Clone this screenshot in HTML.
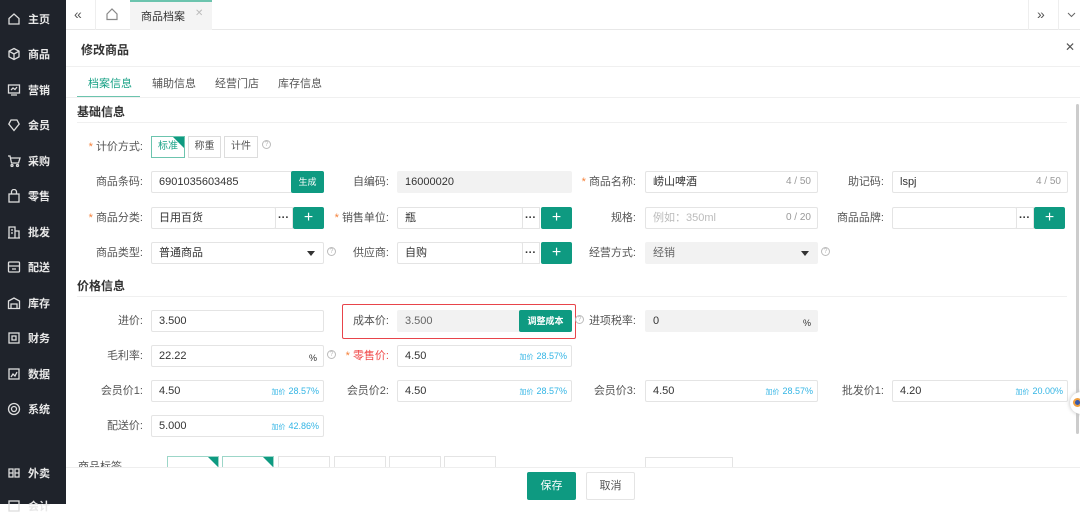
<!DOCTYPE html>
<html><head><meta charset="utf-8"><style>
*{box-sizing:border-box;margin:0;padding:0}
body{width:1080px;height:504px;overflow:hidden;position:relative;background:#fff;font-family:"Liberation Sans","Noto Sans CJK SC",sans-serif;font-size:11px;color:#333}
.a{position:absolute}
.side{left:0;top:0;width:66px;height:504px;background:#1f232b}
.si{position:absolute;left:7px;color:#e8e8e8;font-size:11px;font-weight:bold;display:flex;align-items:center;gap:7px}
.si svg{width:14px;height:14px;stroke:#ddd;fill:none;stroke-width:1.3}
.lbl{position:absolute;text-align:right;width:90px;color:#555;font-size:11px;line-height:22px;height:22px}
.in{position:absolute;height:22px;border:1px solid #e4e4e4;border-radius:2px;background:#fff;line-height:20px;padding-left:7px;font-size:11px;color:#333}
.dis{background:#f2f2f2;border-color:#f2f2f2;color:#666}
.cnt{position:absolute;right:6px;top:0;color:#999;font-size:10px;line-height:20px}
.pct{position:absolute;right:4px;top:0;color:#33b5e5;font-size:9px;line-height:20px}
.pct b{font-weight:normal;font-size:7px;margin-right:3px}
.plus{position:absolute;width:31px;height:22px;background:#0e9a81;color:#fff;font-size:16px;text-align:center;line-height:21px;border-radius:2px}
.dots{position:absolute;width:18px;height:22px;border:1px solid #e4e4e4;border-left:none;text-align:center;line-height:20px;font-weight:bold;color:#333}
.star{color:#f5813a}
.q{position:absolute;width:9px;height:9px;border:1px solid #bbb;border-radius:50%;font-size:7px;color:#bbb;text-align:center;line-height:8px}
.h{position:absolute;left:77px;font-weight:bold;font-size:12px;color:#333}
.arrow{position:absolute;right:8px;top:8px;width:0;height:0;border-left:4px solid transparent;border-right:4px solid transparent;border-top:5px solid #333}
</style></head><body>
<div class="a side"></div>
<div class="si" style="top:11px"><svg viewBox="0 0 14 14"><path d="M2 6.5L7 2l5 4.5V12H2z"/></svg>主页</div>
<div class="si" style="top:46px"><svg viewBox="0 0 14 14"><path d="M7 1.5l5 2.7v5.6L7 12.5 2 9.8V4.2zM2 4.2L7 7l5-2.8M7 7v5.5"/></svg>商品</div>
<div class="si" style="top:82px"><svg viewBox="0 0 14 14"><rect x="1.5" y="2" width="11" height="8"/><path d="M4 12h6M4 7l2-2 2 1.5 2-2.5"/></svg>营销</div>
<div class="si" style="top:117px"><svg viewBox="0 0 14 14"><path d="M7 12.5L1.8 6 4 2h6l2.2 4z"/></svg>会员</div>
<div class="si" style="top:153px"><svg viewBox="0 0 14 14"><path d="M1 2h2l1.5 7h7L13 4H4"/><circle cx="5" cy="11.5" r="1"/><circle cx="10.5" cy="11.5" r="1"/></svg>采购</div>
<div class="si" style="top:188px"><svg viewBox="0 0 14 14"><rect x="2" y="5" width="10" height="8"/><path d="M4.5 5V3a2.5 2.5 0 015 0v2"/></svg>零售</div>
<div class="si" style="top:224px"><svg viewBox="0 0 14 14"><path d="M2 13V2h6v11M8 6h4v7M1 13h12M4 5h2M4 8h2"/></svg>批发</div>
<div class="si" style="top:259px"><svg viewBox="0 0 14 14"><rect x="1.5" y="2" width="11" height="10" rx="1"/><path d="M1.5 6h11M5 9h4"/></svg>配送</div>
<div class="si" style="top:295px"><svg viewBox="0 0 14 14"><path d="M1.5 5L7 2l5.5 3v7.5h-11zM4 12.5V8h6v4.5"/></svg>库存</div>
<div class="si" style="top:330px"><svg viewBox="0 0 14 14"><rect x="2" y="2" width="10" height="10"/><rect x="5" y="5" width="4" height="4"/></svg>财务</div>
<div class="si" style="top:366px"><svg viewBox="0 0 14 14"><rect x="2" y="2" width="10" height="10"/><path d="M4 10l2-3 2 2 2-4"/></svg>数据</div>
<div class="si" style="top:401px"><svg viewBox="0 0 14 14"><circle cx="7" cy="7" r="5.5"/><circle cx="7" cy="7" r="2.5"/></svg>系统</div>
<div class="si" style="top:465px"><svg viewBox="0 0 14 14"><path d="M2 3h4v8H2zM8 3h4v8H8zM2 7h4M8 7h4"/></svg>外卖</div>
<div class="si" style="top:498px"><svg viewBox="0 0 14 14"><rect x="2" y="2" width="10" height="10"/></svg>会计</div>

<div class="a" style="left:66px;top:0;width:1014px;height:30px;border-bottom:1px solid #e8e8e8;background:#fff"></div>
<div class="a" style="left:95px;top:0;width:1px;height:30px;background:#eee"></div>
<div class="a" style="left:74px;top:6px;font-size:14px;color:#555">«</div>
<svg class="a" style="left:105px;top:7px" width="14" height="14" viewBox="0 0 14 14"><path d="M2 7L7 2l5 5v5.5H2z" fill="none" stroke="#888" stroke-width="1.2"/></svg>
<div class="a" style="left:130px;top:0;width:82px;height:30px;background:#f4f4f4;border-top:2px solid #6cc4ae"></div>
<div class="a" style="left:141px;top:8px;font-size:11px;color:#333">商品档案</div>
<div class="a" style="left:195px;top:8px;font-size:10px;color:#bbb">✕</div>
<div class="a" style="left:1028px;top:0;width:1px;height:30px;background:#eee"></div>
<div class="a" style="left:1058px;top:0;width:1px;height:30px;background:#eee"></div>
<div class="a" style="left:1037px;top:6px;font-size:14px;color:#555">»</div>
<svg class="a" style="left:1067px;top:12px" width="9" height="6" viewBox="0 0 9 6"><path d="M1 1l3.5 3.5L8 1" fill="none" stroke="#666"/></svg>

<div class="a" style="left:81px;top:41px;font-size:12px;font-weight:bold;color:#333">修改商品</div>
<div class="a" style="left:1065px;top:40px;font-size:12px;color:#555">✕</div>
<div class="a" style="left:66px;top:66px;width:1014px;height:1px;background:#f0f0f0"></div>
<div class="a" style="left:88px;top:75px;font-size:11px;color:#17a185">档案信息</div>
<div class="a" style="left:152px;top:75px;font-size:11px;color:#555">辅助信息</div>
<div class="a" style="left:215px;top:75px;font-size:11px;color:#555">经营门店</div>
<div class="a" style="left:278px;top:75px;font-size:11px;color:#555">库存信息</div>
<div class="a" style="left:77px;top:96px;width:63px;height:2px;background:#6cc4ae"></div>
<div class="a" style="left:66px;top:97px;width:1014px;height:1px;background:#f0f0f0"></div>
<div class="a" style="left:1076px;top:104px;width:3px;height:330px;background:#ccc;border-radius:2px"></div>

<div class="h" style="top:103px">基础信息</div>
<div class="a" style="left:77px;top:122px;width:990px;height:1px;background:#f0f0f0"></div>

<div class="lbl" style="left:53px;top:136px"><span class="star">* </span>计价方式:</div>
<div class="a" style="left:151px;top:136px;width:34px;height:22px;border:1px solid #6cc4ae;color:#17a185;text-align:center;line-height:20px;font-size:10px">标准</div>
<div class="a" style="left:173px;top:137px;width:0;height:0;border-left:11px solid transparent;border-top:11px solid #0e9a81"></div>
<div class="a" style="left:188px;top:136px;width:33px;height:22px;border:1px solid #ddd;text-align:center;line-height:20px;font-size:10px;color:#555">称重</div>
<div class="a" style="left:224px;top:136px;width:34px;height:22px;border:1px solid #ddd;text-align:center;line-height:20px;font-size:10px;color:#555">计件</div>
<div class="q" style="left:262px;top:140px">?</div>

<div class="lbl" style="left:53px;top:171px">商品条码:</div>
<div class="in" style="left:151px;top:171px;width:142px">6901035603485</div>
<div class="a" style="left:291px;top:171px;width:33px;height:22px;background:#0e9a81;color:#fff;font-size:9px;text-align:center;line-height:22px;border-radius:2px">生成</div>
<div class="lbl" style="left:299px;top:171px">自编码:</div>
<div class="in dis" style="left:397px;top:171px;width:175px;color:#333">16000020</div>
<div class="lbl" style="left:546px;top:171px"><span class="star">* </span>商品名称:</div>
<div class="in" style="left:645px;top:171px;width:173px">崂山啤酒<span class="cnt">4 / 50</span></div>
<div class="lbl" style="left:794px;top:171px">助记码:</div>
<div class="in" style="left:892px;top:171px;width:176px">lspj<span class="cnt">4 / 50</span></div>

<div class="lbl" style="left:53px;top:207px"><span class="star">* </span>商品分类:</div>
<div class="in" style="left:151px;top:207px;width:125px">日用百货</div>
<div class="dots" style="left:275px;top:207px">···</div>
<div class="plus" style="left:293px;top:207px">+</div>
<div class="lbl" style="left:299px;top:207px"><span class="star">* </span>销售单位:</div>
<div class="in" style="left:397px;top:207px;width:126px">瓶</div>
<div class="dots" style="left:522px;top:207px">···</div>
<div class="plus" style="left:541px;top:207px">+</div>
<div class="lbl" style="left:546px;top:207px">规格:</div>
<div class="in" style="left:645px;top:207px;width:173px;color:#bbb">例如：350ml<span class="cnt">0 / 20</span></div>
<div class="lbl" style="left:794px;top:207px">商品品牌:</div>
<div class="in" style="left:892px;top:207px;width:125px"></div>
<div class="dots" style="left:1016px;top:207px">···</div>
<div class="plus" style="left:1034px;top:207px">+</div>

<div class="lbl" style="left:53px;top:242px">商品类型:</div>
<div class="in" style="left:151px;top:242px;width:173px">普通商品<span class="arrow"></span></div>
<div class="q" style="left:327px;top:247px">?</div>
<div class="lbl" style="left:299px;top:242px">供应商:</div>
<div class="in" style="left:397px;top:242px;width:126px">自购</div>
<div class="dots" style="left:522px;top:242px">···</div>
<div class="plus" style="left:541px;top:242px">+</div>
<div class="lbl" style="left:546px;top:242px">经营方式:</div>
<div class="in dis" style="left:645px;top:242px;width:173px">经销<span class="arrow"></span></div>
<div class="q" style="left:821px;top:247px">?</div>

<div class="h" style="top:277px">价格信息</div>
<div class="a" style="left:77px;top:296px;width:990px;height:1px;background:#f0f0f0"></div>

<div class="lbl" style="left:53px;top:310px">进价:</div>
<div class="in" style="left:151px;top:310px;width:173px">3.500</div>
<div class="a" style="left:342px;top:304px;width:234px;height:35px;border:1.5px solid #e8444a;border-radius:2px"></div>
<div class="lbl" style="left:299px;top:310px">成本价:</div>
<div class="in dis" style="left:397px;top:310px;width:175px">3.500</div>
<div class="a" style="left:519px;top:310px;width:53px;height:22px;background:#0e9a81;color:#fff;font-size:9px;text-align:center;line-height:22px;border-radius:2px;font-weight:bold">调整成本</div>
<div class="q" style="left:575px;top:315px">?</div>
<div class="lbl" style="left:546px;top:310px">进项税率:</div>
<div class="in dis" style="left:645px;top:310px;width:173px;color:#333">0<span class="cnt" style="color:#333;font-size:9px;top:2px">%</span></div>

<div class="lbl" style="left:53px;top:345px">毛利率:</div>
<div class="in" style="left:151px;top:345px;width:173px">22.22<span class="cnt" style="color:#333;font-size:9px;top:2px">%</span></div>
<div class="q" style="left:327px;top:350px">?</div>
<div class="lbl" style="left:299px;top:345px;color:#f04848"><span class="star">* </span>零售价:</div>
<div class="in" style="left:397px;top:345px;width:175px">4.50<span class="pct"><b>加价</b>28.57%</span></div>

<div class="lbl" style="left:53px;top:380px">会员价1:</div>
<div class="in" style="left:151px;top:380px;width:173px">4.50<span class="pct"><b>加价</b>28.57%</span></div>
<div class="lbl" style="left:299px;top:380px">会员价2:</div>
<div class="in" style="left:397px;top:380px;width:175px">4.50<span class="pct"><b>加价</b>28.57%</span></div>
<div class="lbl" style="left:546px;top:380px">会员价3:</div>
<div class="in" style="left:645px;top:380px;width:173px">4.50<span class="pct"><b>加价</b>28.57%</span></div>
<div class="lbl" style="left:794px;top:380px">批发价1:</div>
<div class="in" style="left:892px;top:380px;width:176px">4.20<span class="pct"><b>加价</b>20.00%</span></div>
<div class="a" style="left:1070px;top:392px;width:22px;height:22px;border-radius:50%;background:#fff;box-shadow:0 0 4px #bbb"></div>
<div class="a" style="left:1073px;top:398px;width:9px;height:9px;border-radius:50%;background:#3a5aa8;border:2px solid #f0a040"></div>

<div class="lbl" style="left:53px;top:415px">配送价:</div>
<div class="in" style="left:151px;top:415px;width:173px">5.000<span class="pct"><b>加价</b>42.86%</span></div>

<div class="a" style="left:78px;top:458px;font-size:11px;color:#555">商品标签</div>
<div class="a" style="left:167px;top:456px;width:52px;height:12px;border:1px solid #9cd6c8;border-bottom:none"></div>
<div class="a" style="left:208px;top:457px;width:0;height:0;border-left:10px solid transparent;border-top:10px solid #0e9a81"></div>
<div class="a" style="left:222px;top:456px;width:52px;height:12px;border:1px solid #9cd6c8;border-bottom:none"></div>
<div class="a" style="left:263px;top:457px;width:0;height:0;border-left:10px solid transparent;border-top:10px solid #0e9a81"></div>
<div class="a" style="left:278px;top:456px;width:52px;height:12px;border:1px solid #e4e4e4;border-bottom:none"></div>
<div class="a" style="left:334px;top:456px;width:52px;height:12px;border:1px solid #e4e4e4;border-bottom:none"></div>
<div class="a" style="left:389px;top:456px;width:52px;height:12px;border:1px solid #e4e4e4;border-bottom:none"></div>
<div class="a" style="left:444px;top:456px;width:52px;height:12px;border:1px solid #e4e4e4;border-bottom:none"></div>
<div class="a" style="left:645px;top:457px;width:88px;height:11px;border:1px solid #e4e4e4;border-bottom:none"></div>

<div class="a" style="left:66px;top:467px;width:1014px;height:37px;background:#fff;border-top:1px solid #eee"></div>
<div class="a" style="left:527px;top:472px;width:49px;height:28px;background:#0e9a81;color:#fff;font-size:11px;text-align:center;line-height:28px;border-radius:2px">保存</div>
<div class="a" style="left:586px;top:472px;width:49px;height:28px;border:1px solid #e4e4e4;color:#555;font-size:11px;text-align:center;line-height:26px;border-radius:2px">取消</div>
</body></html>
